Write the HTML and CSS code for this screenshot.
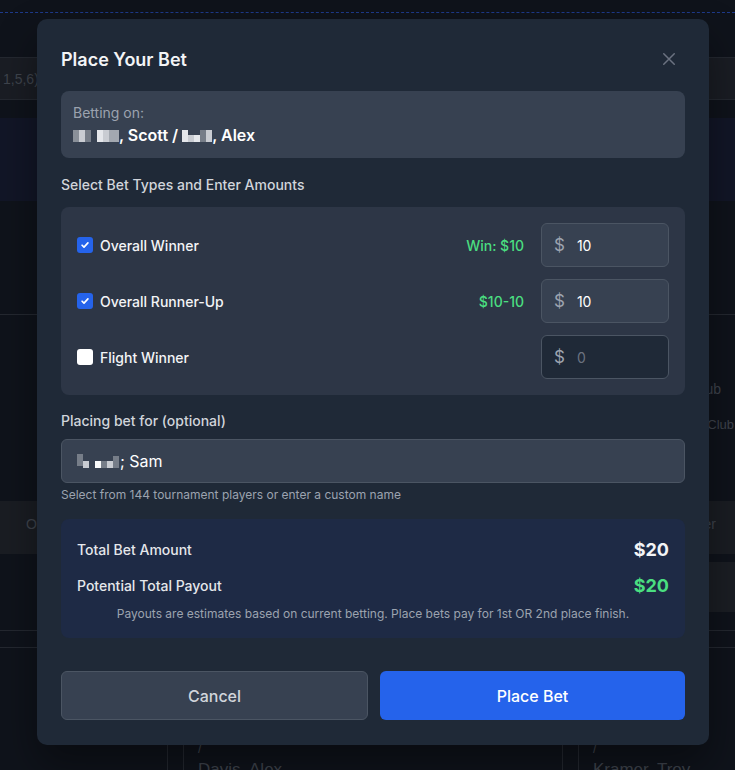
FILE: index.html
```html
<!DOCTYPE html>
<html lang="en">
<head>
  <meta charset="UTF-8" />
  <meta name="viewport" content="width=device-width, initial-scale=1.0"/>
  <title>Place Your Bet</title>
  <link rel="stylesheet" href="styles.css">
</head>
<body>

  <!-- page behind the dialog -->
  <div class="page">
    <div class="page-top"></div>
    <div class="page-gap"></div>
    <div class="band band-filter"><span class="faint">1,5,6)</span></div>
    <div class="page-gap-sm"></div>
    <div class="band band-blue"></div>
    <div class="page-section">
      <div class="side-row row-a"><span></span><span class="faint">ub</span></div>
      <div class="side-row row-b"><span></span><span class="faint small">y Club</span></div>
    </div>
    <div class="band band-grey"><span class="faint">Ov</span><span class="faint">er</span></div>
    <div class="side-row row-c"><span></span><span class="side-block"></span></div>
    <div class="page-line"></div>
    <div class="cards">
      <div class="card-edge"></div>
      <div class="card"><span class="faint">/</span><span class="faint big">Davis, Alex</span></div>
      <div class="card-edge"></div>
      <div class="card narrow"><span class="faint">/</span><span class="faint big">Kramer, Troy</span></div>
    </div>
  </div>

  <div class="overlay">
    <div class="modal">
      <div class="modal-head">
        <h2>Place Your Bet</h2>
        <button class="close-btn" aria-label="Close">
          <svg width="18" height="18" viewBox="0 0 24 24" fill="none" stroke="currentColor" stroke-width="2" stroke-linecap="round"><path d="M5 5l14 14M19 5L5 19"/></svg>
        </button>
      </div>

      <div class="betting-on">
        <div class="muted">Betting on:</div>
        <div class="names">
          <span class="px"><i class="c1"></i><i class="c2"></i><i class="c3"></i><i class="gap"></i><i class="c4"></i><i class="c2"></i><i class="c5"></i></span>, Scott / <span class="px"><i class="c4"></i><i class="c2 low"></i><i class="c4 low"></i><i class="c3"></i><i class="c2"></i></span>, Alex
        </div>
      </div>

      <div class="section-label">Select Bet Types and Enter Amounts</div>

      <div class="bet-types">
        <div class="bet-row">
          <label class="check"><span class="box on"><svg width="10" height="10" viewBox="0 0 12 12" fill="none" stroke="#fff" stroke-width="2" stroke-linecap="round" stroke-linejoin="round"><path d="M2.5 6.3l2.3 2.2 4.7-5"/></svg></span>Overall Winner</label>
          <span class="odds">Win: $10</span>
          <div class="amount"><span class="dollar">$</span><span class="val">10</span></div>
        </div>
        <div class="bet-row">
          <label class="check"><span class="box on"><svg width="10" height="10" viewBox="0 0 12 12" fill="none" stroke="#fff" stroke-width="2" stroke-linecap="round" stroke-linejoin="round"><path d="M2.5 6.3l2.3 2.2 4.7-5"/></svg></span>Overall Runner-Up</label>
          <span class="odds">$10-10</span>
          <div class="amount"><span class="dollar">$</span><span class="val">10</span></div>
        </div>
        <div class="bet-row">
          <label class="check"><span class="box"></span>Flight Winner</label>
          <span class="odds"></span>
          <div class="amount off"><span class="dollar">$</span><span class="val">0</span></div>
        </div>
      </div>

      <div class="section-label">Placing bet for (optional)</div>
      <div class="text-input">
        <span class="px"><i class="c3 top"></i><i class="c2 low"></i><i class="gap"></i><i class="c6 low"></i><i class="c3 low"></i><i class="c2 low"></i><i class="c3"></i></span>; Sam
      </div>
      <div class="hint">Select from 144 tournament players or enter a custom name</div>

      <div class="summary">
        <div class="sum-row"><span>Total Bet Amount</span><strong>$20</strong></div>
        <div class="sum-row"><span>Potential Total Payout</span><strong class="green">$20</strong></div>
        <p class="note">Payouts are estimates based on current betting. Place bets pay for 1st OR 2nd place finish.</p>
      </div>

      <div class="actions">
        <button class="btn cancel">Cancel</button>
        <button class="btn primary">Place Bet</button>
      </div>
    </div>
  </div>

</body>
</html>
```

FILE: styles.css
```css
* {
  box-sizing: border-box;
}

body {
  margin: 0;
  width: 735px;
  height: 770px;
  overflow: hidden;
  position: relative;
  background: #0f131b;
  font-family: Inter, 'Noto Sans', sans-serif;
  color: #f3f4f6;
}

/* background page */
.page {
  display: flex;
  flex-direction: column;
  height: 770px;
  overflow: hidden;
}

.page > * {
  flex-shrink: 0;
}

.page-top {
  height: 13px;
  border-bottom: 1px dashed #1e3a8a;
}

.page-gap {
  height: 44px;
}

.page-gap-sm {
  height: 18px;
}

.band {
  display: flex;
  justify-content: space-between;
  align-items: center;
  border-top: 1px solid #242830;
  border-bottom: 1px solid #242830;
}

.band-filter {
  height: 43px;
  background: #1a1d24;
  padding-left: 3px;
}

.band-blue {
  height: 83px;
  background: #121627;
  border: none;
}

.page-section {
  height: 300px;
  border-top: 1px solid #242830;
  margin-top: 113px;
  padding-top: 66px;
}

.faint {
  color: #3f444d;
  font-family: 'Liberation Sans', sans-serif;
  font-size: 14px;
}

.faint.small {
  font-size: 13px;
}

.side-row {
  display: flex;
  justify-content: space-between;
}

.row-a {
  height: 36px;
}

.row-a .faint {
  margin-right: 14px;
}

.row-b .faint {
  margin-right: 1px;
}

.band-grey {
  height: 53px;
  background: #1a1d23;
  padding: 0 19px 8px 26px;
  border: none;
  margin-top: -113px;
}

.row-c {
  margin-top: 8px;
}

.side-block {
  width: 30px;
  height: 50px;
  background: #1b1e24;
}

.page-line {
  height: 18px;
  margin-top: 18px;
  border-top: 1px solid #242830;
  border-bottom: 1px solid #242830;
}

.cards {
  flex: 1 1 auto !important;
  min-height: 0;
  display: flex;
  padding-left: 167px;
  overflow: hidden;
}

.card-edge {
  flex-shrink: 0;
  width: 17px;
  border-left: 1px solid #242830;
  border-right: 1px solid #242830;
}

.card {
  flex-shrink: 0;
  width: 378px;
  display: flex;
  flex-direction: column;
  padding: 92px 0 0 14px;
}

.card.narrow {
  width: 156px;
}

.card .big {
  font-size: 17px;
  margin-top: 4px;
}

/* dialog */
.overlay {
  position: absolute;
  inset: 0;
  padding: 19px 0 0 37px;
}

.modal {
  width: 672px;
  height: 726px;
  background: #1f2937;
  border-radius: 10px;
  padding: 24px;
  box-shadow: 0 20px 40px rgba(0, 0, 0, 0.4);
}

.modal-head {
  height: 32px;
  display: flex;
  justify-content: space-between;
  align-items: center;
  margin-bottom: 16px;
}

.modal-head h2 {
  margin: 0;
  font-size: 18px;
  font-weight: 600;
  color: #f3f4f6;
}

.close-btn {
  background: none;
  border: none;
  padding: 0;
  margin-right: 7px;
  color: #6b7280;
  display: flex;
}

.betting-on {
  background: #374151;
  border-radius: 8px;
  padding: 12px 12px 11px;
}

.muted {
  font-size: 14px;
  line-height: 20px;
  color: #9ca3af;
}

.names {
  font-size: 16px;
  line-height: 24px;
  font-weight: 600;
  color: #fff;
}

/* pixelated names */
.px {
  display: inline-flex;
  align-items: flex-end;
  height: 14px;
  vertical-align: -1px;
}

.px i {
  display: block;
  width: 6px;
  height: 12px;
}

.px i.low {
  height: 7px;
}

.px i.top {
  height: 12px;
  align-self: flex-start;
}

.px i.gap {
  width: 6px;
  height: 0;
}

.c1 { background: #8a9099; }
.c2 { background: #c9ccd2; }
.c3 { background: #767d88; }
.c4 { background: #e5e7eb; }
.c5 { background: #a3a8b0; width: 10px !important; }
.c6 { background: #f9fafb; }

.section-label {
  margin-top: 17px;
  margin-bottom: 12px;
  font-size: 14px;
  line-height: 20px;
  font-weight: 500;
  color: #d1d5db;
}

.bet-types {
  background: #2d3646;
  border-radius: 8px;
  padding: 16px;
  display: flex;
  flex-direction: column;
  gap: 12px;
}

.bet-row {
  display: flex;
  align-items: center;
  height: 44px;
}

.check {
  flex: 1;
  display: flex;
  align-items: center;
  gap: 7px;
  font-size: 14px;
  font-weight: 500;
  color: #f3f4f6;
}

.box {
  width: 16px;
  height: 16px;
  border-radius: 3px;
  background: #fff;
  display: flex;
  align-items: center;
  justify-content: center;
}

.box.on {
  background: #2563eb;
}

.odds {
  font-size: 14px;
  font-weight: 500;
  color: #4ade80;
  margin-right: 17px;
}

.amount {
  width: 128px;
  height: 44px;
  display: flex;
  align-items: center;
  gap: 12px;
  padding-left: 12px;
  background: #374151;
  border: 1px solid #4b5563;
  border-radius: 6px;
}

.amount.off {
  background: #1f2937;
}

.dollar {
  font-size: 17px;
  color: #9ca3af;
}

.val {
  font-size: 14px;
  color: #fff;
}

.amount.off .val {
  color: #6b7280;
}

.bet-types + .section-label {
  margin-top: 16px;
  margin-bottom: 8px;
}

.text-input {
  height: 44px;
  display: flex;
  align-items: center;
  padding-left: 15px;
  background: #374151;
  border: 1px solid #4b5563;
  border-radius: 6px;
  font-size: 16px;
  color: #fff;
}

.text-input .px {
  margin-right: 1px;
}

.hint {
  margin-top: 4px;
  font-size: 12px;
  line-height: 16px;
  color: #9ca3af;
}

.summary {
  margin-top: 16px;
  background: #1e2a45;
  border-radius: 8px;
  padding: 16px 16px 16px;
}

.sum-row {
  display: flex;
  justify-content: space-between;
  align-items: center;
  height: 28px;
  font-size: 14px;
  font-weight: 500;
  color: #e5e7eb;
}

.sum-row + .sum-row {
  margin-top: 8px;
}

.sum-row strong {
  font-size: 18px;
  font-weight: 700;
  color: #f3f4f6;
}

.sum-row strong.green {
  color: #4ade80;
}

.note {
  margin: 7px 0 0;
  text-align: center;
  font-size: 12px;
  line-height: 16px;
  color: #9ca3af;
}

.actions {
  margin-top: 33px;
  display: flex;
  gap: 12px;
}

.btn {
  flex: 1;
  height: 49px;
  border-radius: 6px;
  font-family: inherit;
  font-size: 16px;
  font-weight: 500;
}

.cancel {
  background: #374151;
  border: 1px solid #4b5563;
  color: #d1d5db;
}

.primary {
  background: #2563eb;
  border: none;
  color: #fff;
}
```
